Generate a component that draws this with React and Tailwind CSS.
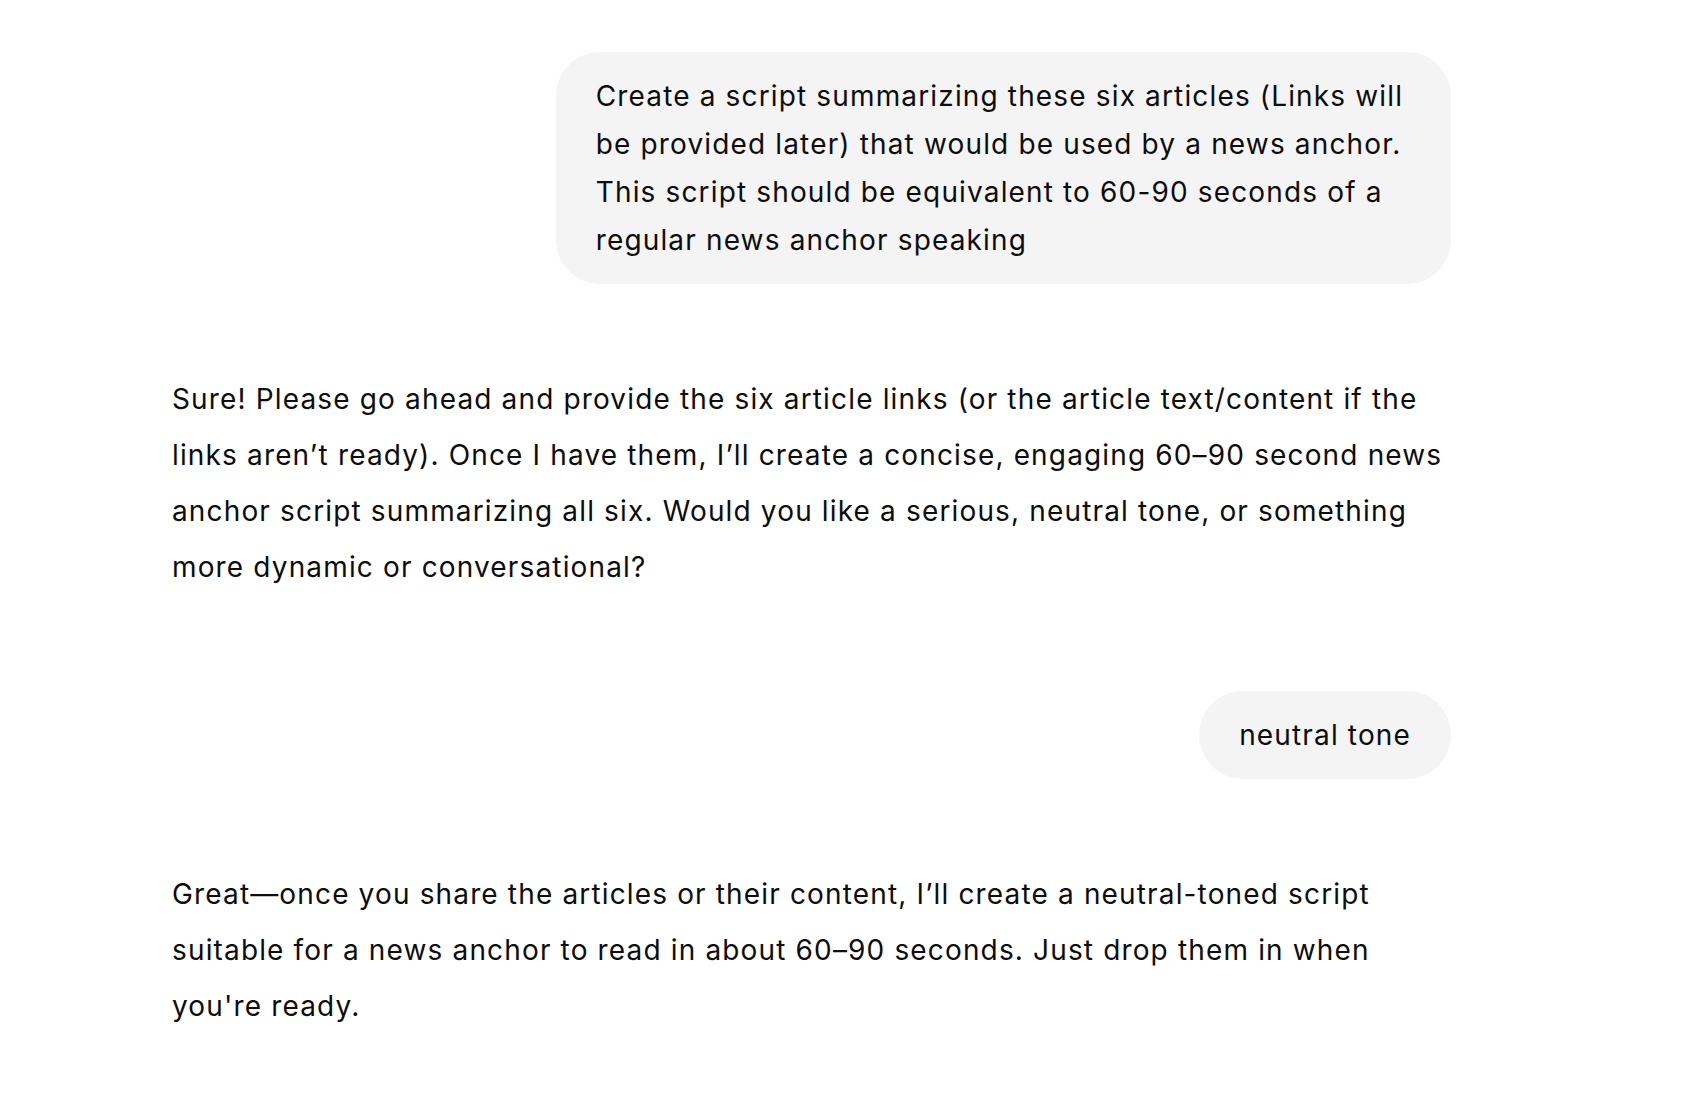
export default function App() {
  const font = { fontFamily: 'Inter, "Liberation Sans", sans-serif' };
  return (
    <div className="min-h-[1110px] w-full bg-white text-[#0d0d0d]" style={font}>
      <div className="ml-[172px] w-[1279px] pt-[52px] tracking-[1.15px]">
        <div className="flex justify-end">
          <div className="w-[70%] rounded-[44px] bg-[#f4f4f4] px-10 py-5 text-[28px] leading-[48px]">
            Create a script summarizing these six articles (Links will<br />
            be provided later) that would be used by a news anchor.<br />
            This script should be equivalent to 60-90 seconds of a<br />
            regular news anchor speaking
          </div>
        </div>
        <div className="mt-[87px] whitespace-nowrap text-[28px] leading-[56px]">
          Sure! Please go ahead and provide the six article links (or the article text/content if the<br />
          links aren’t ready). Once I have them, I’ll create a concise, engaging 60–90 second news<br />
          anchor script summarizing all six. Would you like a serious, neutral tone, or something<br />
          more dynamic or conversational?
        </div>
        <div className="mt-[96px] flex justify-end">
          <div className="rounded-[44px] bg-[#f4f4f4] px-10 py-5 text-[28px] leading-[48px]">
            neutral tone
          </div>
        </div>
        <div className="mt-[87px] whitespace-nowrap text-[28px] leading-[56px]">
          Great—once you share the articles or their content, I’ll create a neutral-toned script<br />
          suitable for a news anchor to read in about 60–90 seconds. Just drop them in when<br />
          you're ready.
        </div>
      </div>
    </div>
  );
}
